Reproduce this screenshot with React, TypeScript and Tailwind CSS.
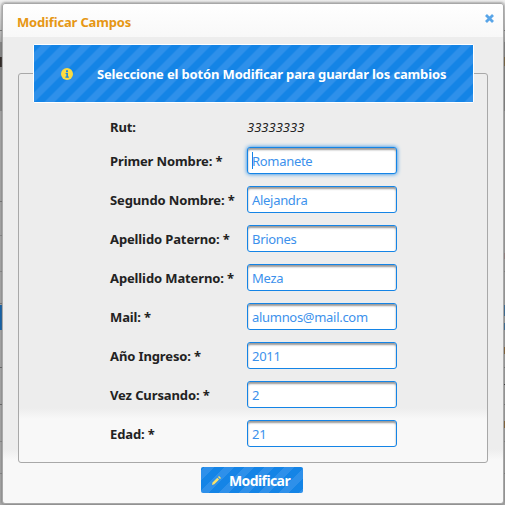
const fields = [
  ["Primer Nombre: *", "Romanete"],
  ["Segundo Nombre: *", "Alejandra"],
  ["Apellido Paterno: *", "Briones"],
  ["Apellido Materno: *", "Meza"],
  ["Mail: *", "alumnos@mail.com"],
  ["Año Ingreso: *", "2011"],
  ["Vez Cursando: *", "2"],
  ["Edad: *", "21"],
];

const stripes =
  "bg-[linear-gradient(135deg,#2e90ea_25%,#1484e6_25%,#1484e6_50%,#2e90ea_50%,#2e90ea_75%,#1484e6_75%)] bg-[length:20px_20px] bg-center";

// Slivers of the page that stay visible on both sides of the dialog
const leftMarks = [
  "top-[30px] h-px bg-[#777]",
  "top-[42px] h-[69px] bg-[#888]",
  "top-[57px] h-[10px] bg-[#2b2320]",
  "top-[201px] h-px bg-[#777]",
  "top-[235px] h-px bg-[#8a8a8a]",
  "top-[271px] h-px bg-[#8a8a8a]",
  "top-[303px] h-px bg-[#777]",
  "top-[305px] h-[25px] bg-[#0c62b0]",
  "top-[367px] h-px bg-[#666]",
  "top-[404px] h-px bg-[#666]",
  "top-[441px] h-px bg-[#888]",
  "top-[473px] h-px bg-[#888]",
];
const rightMarks = [
  "top-[30px] h-px bg-[#777]",
  "top-[42px] h-[69px] bg-[#888]",
  "top-[57px] h-[9px] bg-[#7a6033]",
  "top-[253px] h-[6px] bg-[#a38c8c]",
  "top-[271px] h-px bg-[#8a8a8a]",
  "top-[305px] h-[11px] bg-[#2a6ca5]",
  "top-[323px] h-[7px] bg-[#2a6ca5]",
  "top-[347px] h-[7px] bg-[#8c6128]",
  "top-[367px] h-px bg-[#777]",
  "top-[384px] h-px bg-[#222]",
  "top-[404px] h-px bg-[#777]",
  "top-[421px] h-[7px] bg-[#8c6128]",
  "top-[441px] h-px bg-[#888]",
  "top-[473px] h-px bg-[#888]",
];

export default function App() {
  return (
    <div className="relative h-[505px] w-[505px] overflow-hidden bg-[linear-gradient(#f0f0f0,#c8c8c8_30px,#aaa_45px)] font-['Noto_Sans',sans-serif] text-[13px] text-[#222]">
      {leftMarks.map((m) => <div key={m} className={`absolute left-0 w-[2px] ${m}`} />)}
      {rightMarks.map((m) => <div key={m} className={`absolute right-0 w-[2px] ${m}`} />)}
      <div className="relative ml-[2px] mt-[3px] flex h-[501px] w-[502px] flex-col rounded-[3px] border border-[#a8a8a8] bg-[linear-gradient(#ededed_445px,#f8f8f8_456px)] shadow-[0_0_3px_#666]">
        <div className="flex h-[33px] shrink-0 items-start justify-between rounded-t-[3px] bg-[linear-gradient(#fff,#f8f8f8)] pl-[14px] pr-[9px] pt-[8px]">
          <span className="whitespace-nowrap text-[13px] font-bold leading-[20px] tracking-[-0.17px] text-[#e69714]">Modificar Campos</span>
          <svg className="mt-[2px]" width="9" height="9" viewBox="0 0 9 9" fill="none" stroke="#59a5e8" strokeWidth="2.8"><path d="M1 1l7 7M8 1l-7 7" /></svg>
        </div>
        <div className="relative z-10 ml-[30px] mt-[7px] flex h-[59px] w-[441px] shrink-0 rounded-[2px] border border-white bg-[#1484e6]">
          <div className={`flex w-full items-center pl-[27px] ${stripes}`}>
            <svg width="12" height="12" viewBox="0 0 13 13"><circle cx="6.5" cy="6.5" r="6.5" fill="#fbdc42" /><path d="M5.5 2.5h2v2h-2zM5 5.3h2.5v4h1v1.2h-3.7v-1.2h1V6.5H5z" fill="#1484e6" /></svg>
            <span className="ml-[24px] mt-[2px] whitespace-nowrap text-[13px] font-bold tracking-[-0.15px] text-white">Seleccione el botón Modificar para guardar los cambios</span>
          </div>
        </div>
        <div className="mx-[15px] -mt-[30px] h-[390px] shrink-0 rounded-[3px] border border-[#a8a8a8] bg-[linear-gradient(#ededed_334px,#f8f8f8_345px)] pl-[91px] pt-[44px]">
          <div className="flex h-[20px] items-center">
            <span className="w-[137px] font-bold tracking-[-0.12px]">Rut:</span>
            <i>33333333</i>
          </div>
          <div className="mt-[9px] flex flex-col gap-[12px]">
            {fields.map(([label, value], i) => (
              <div key={label} className="flex h-[27px] items-center">
                <span className="w-[137px] whitespace-nowrap pt-[2px] font-bold tracking-[-0.12px]">{label}</span>
                <div className={`flex h-[27px] w-[150px] items-center rounded-[3px] border border-[#1484e6] bg-white pl-1 pt-[2px] tracking-[-0.3px] text-[#3c91ec] ${i === 0 ? "shadow-[0_0_4px_#1484e6,inset_0_2px_2px_#999]" : "shadow-[inset_0_2px_2px_#999]"}`}>
                  {i === 0 && <span className="-mr-px -mt-[2px] h-[17px] w-px bg-[#1484e6]" />}
                  {value}
                </div>
              </div>
            ))}
          </div>
        </div>
        <div className={`ml-[198px] mt-[4px] flex h-[26px] w-[102px] items-center rounded-[2px] pl-[10px] ${stripes}`}>
          <svg width="11" height="11" viewBox="0 0 11 11"><path d="M1 10l.5-2.5 4.8-4.8 1.8 1.8-4.8 4.8zM7 2l1-1 2 2-1 1z" fill="#fbe26a" /></svg>
          <span className="ml-[7px] text-[14px] font-bold tracking-[-0.6px] text-white">Modificar</span>
        </div>
      </div>
    </div>
  );
}
